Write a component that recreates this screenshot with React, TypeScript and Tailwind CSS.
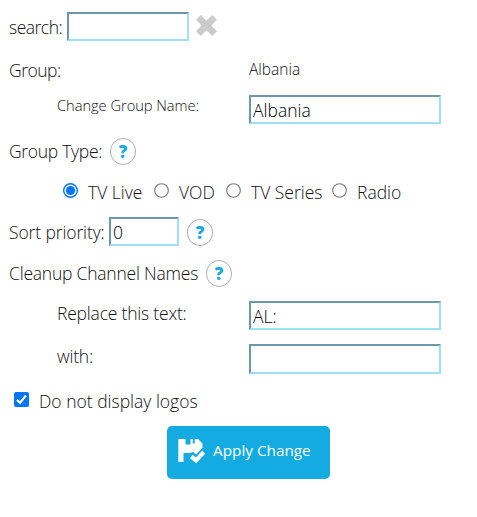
import type { ReactNode } from 'react';

const field =
  'box-border block rounded-none border-2 border-t-[#6d97aa] border-l-[#6d97aa] border-r-[#9fe0f6] border-b-[#9fe0f6] bg-white px-[2px] text-[17.5px] leading-[25px] text-black outline-none';

function Help() {
  return (
    <button className="flex h-[27px] w-[26px] shrink-0 items-center justify-center rounded-full border border-[#b0b0b0] bg-white text-[17px] leading-none font-extrabold text-[#14abe3]">
      ?
    </button>
  );
}

function Radio({ label, checked = false, className }: { label: string; checked?: boolean; className: string }) {
  return (
    <label className={'flex items-start ' + className}>
      <svg viewBox="0 0 15 15" className="block h-[15px] w-[15px] shrink-0">
        <circle cx="7.5" cy="7.5" r="6.8" fill="#fff" stroke={checked ? '#0075ff' : '#767676'} strokeWidth={checked ? 1.4 : 1.1} />
        {checked && <circle cx="7.5" cy="7.5" r="4.6" fill="#0075ff" />}
      </svg>
      <Text className="ml-[10px] pt-[1px]">{label}</Text>
    </label>
  );
}

function Text({ children, className = '' }: { children: ReactNode; className?: string }) {
  return <span className={'block shrink-0 whitespace-nowrap text-[17.5px] leading-none ' + className}>{children}</span>;
}

export default function App() {
  return (
    <main className="h-[517px] w-[477px] overflow-hidden bg-white pt-3 pl-[9px] font-['Open_Sans','Noto_Sans',sans-serif] font-light text-[#111]">
      <div className="flex h-[29px] items-start">
        <Text className="w-[58px] pt-[7px] tracking-[-0.5px]">search:</Text>
        <input className={field + ' h-[29px] w-[122px]'} />
        <svg viewBox="0 0 21 21" className="mt-[3px] ml-[7px] h-[21px] w-[21px]">
          <path d="M4.8 0 L10.5 5.7 L16.2 0 L21 4.8 L15.3 10.5 L21 16.2 L16.2 21 L10.5 15.3 L4.8 21 L0 16.2 L5.7 10.5 L0 4.8Z" fill="#cbcbcb" />
        </svg>
      </div>

      <div className="mt-[15px] flex h-[30px] items-start">
        <Text className="w-[240px] pt-[6px] tracking-[-0.5px]">Group:</Text>
        <Text className="pt-[6px] text-[15.5px]!">Albania</Text>
      </div>

      <div className="mt-[9px] flex h-[29px] items-start pl-12">
        <Text className="w-[192px] pt-[3px] text-[14.7px]! tracking-[-0.05px]">Change Group Name:</Text>
        <input className={field + ' h-[29px] w-[192px]'} defaultValue="Albania" />
      </div>

      <div className="mt-[14px] flex h-[27px] items-start">
        <Text className="w-[101px] pt-[5px] tracking-[-0.3px]">Group Type:</Text>
        <Help />
      </div>

      <div className="mt-[18px] flex h-[28px] items-start pl-[54px]">
        <Radio label="TV Live" checked className="w-[91px]" />
        <Radio label="VOD" className="w-[72px]" />
        <Radio label="TV Series" className="w-[106px]" />
        <Radio label="Radio" className="w-[80px]" />
      </div>

      <div className="mt-[6px] flex h-[30px] items-start">
        <Text className="w-[100px] pt-[7px] tracking-[-0.12px]">Sort priority:</Text>
        <input className={field + ' h-[29px] w-[70px]'} defaultValue="0" />
        <div className="mt-[2px] ml-2">
          <Help />
        </div>
      </div>

      <div className="mt-[13px] flex h-[27px] items-start">
        <Text className="w-[197px] pt-[5px] tracking-[-0.22px]">Cleanup Channel Names</Text>
        <Help />
      </div>

      <div className="mt-[14px] flex h-[29px] items-start pl-12">
        <Text className="w-[192px] pt-[4px] tracking-[-0.2px]">Replace this text:</Text>
        <input className={field + ' h-[29px] w-[192px]'} defaultValue="AL:" />
      </div>

      <div className="mt-[14px] flex h-[30px] items-start pl-12">
        <Text className="w-[192px] pt-[4px] tracking-[-0.2px]">with:</Text>
        <input className={field + ' h-[30px] w-[192px]'} />
      </div>

      <label className="mt-[18px] flex h-[34px] items-start pl-[5px]">
        <svg viewBox="0 0 15 15" className="h-[15px] w-[15px] shrink-0">
          <rect width="15" height="15" rx="2" fill="#0075ff" />
          <path d="M3 7.8 L6 10.8 L12 3.5" fill="none" stroke="#fff" strokeWidth="2.2" />
        </svg>
        <Text className="ml-[10px] pt-[1px]">Do not display logos</Text>
      </label>

      <button className="ml-[158px] flex h-[53px] w-[163px] items-start rounded-[5px] bg-[#14abe3] pt-[13px] pl-[11px] font-normal text-white">
        <svg viewBox="0 0 28 25" className="h-[25px] w-[28px] shrink-0">
          <path d="M0.3 0H7.5V5.5H12.5V0H14.7V4.5H16.7V0H20L24.5 4.5V9L18 15.5L15.5 13L11.5 14H5.5V23H0.3Z" fill="#fff" />
          <path d="M13.3 17L18 21.3L25.7 13.3" fill="none" stroke="#14abe3" strokeWidth="6.5" />
          <path d="M13.3 17.5L18 21.3L25.7 13.3" fill="none" stroke="#fff" strokeWidth="4.2" />
        </svg>
        <Text className="ml-[7px] pt-[4px] text-[15.3px]!">Apply Change</Text>
      </button>
    </main>
  );
}
